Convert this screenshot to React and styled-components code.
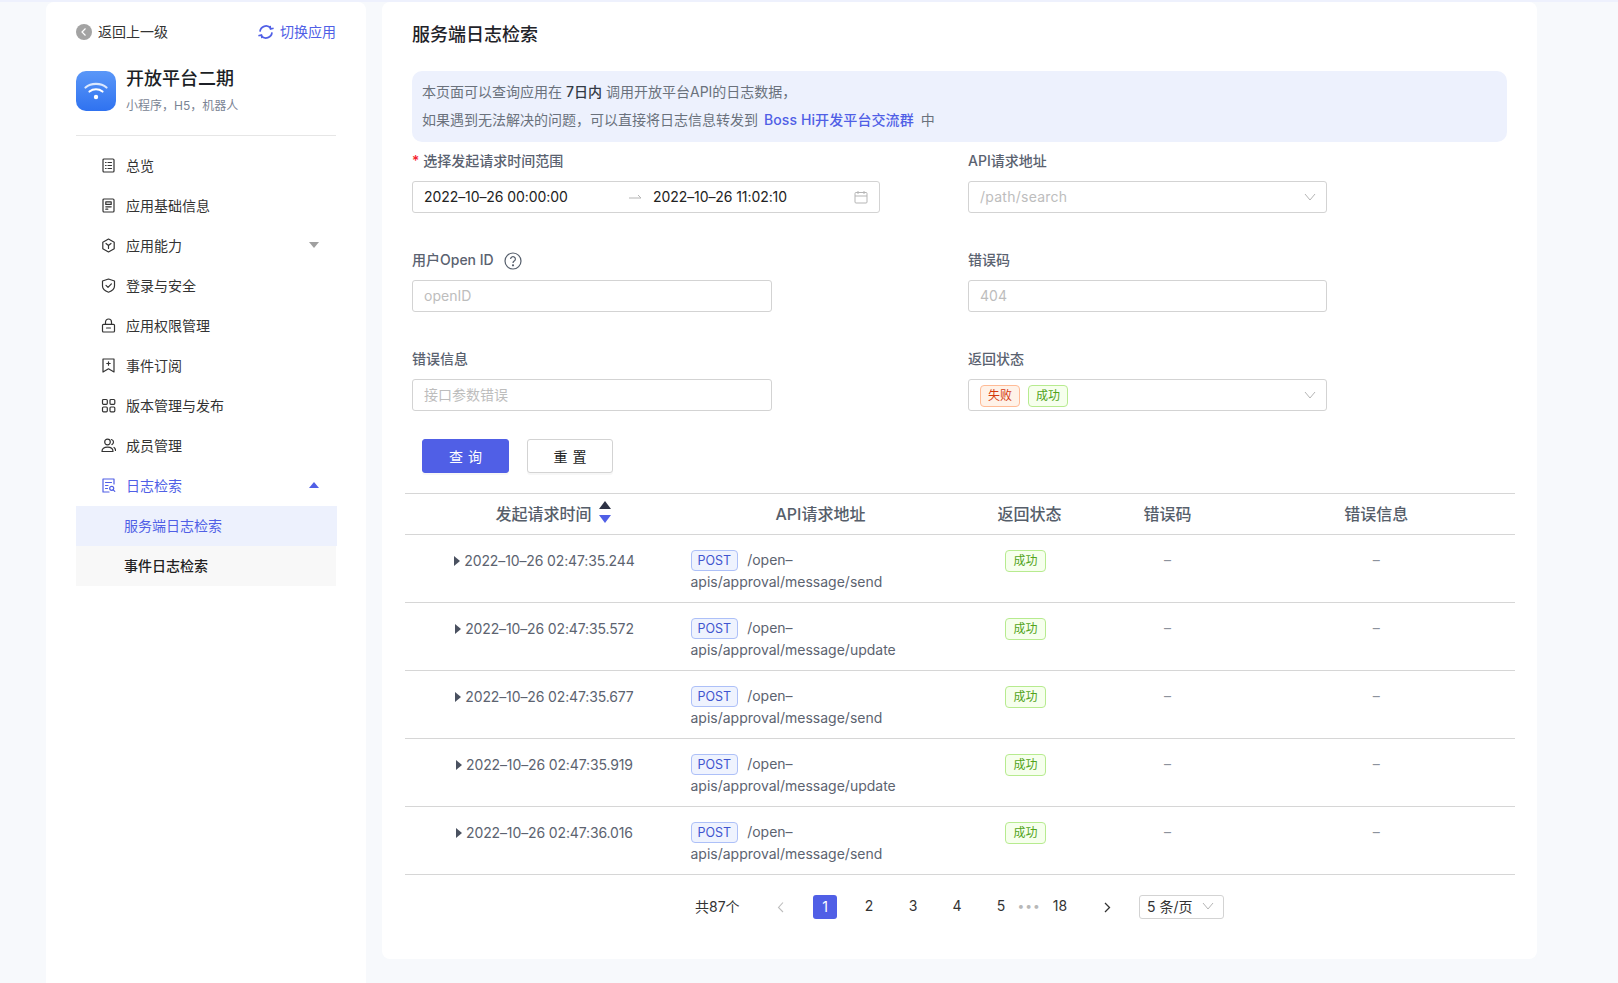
import React from "react";
import styled, { createGlobalStyle } from "styled-components";

const FONT = `Inter, "Noto Sans CJK SC", "Noto Sans", sans-serif`;
const BLUE = "#505fe6";

const Global = createGlobalStyle`
  html, body { margin: 0; padding: 0; height: 100%; background: #f7f9fc; overflow: hidden; }
  body { font-family: ${FONT}; font-size: 14px; color: #222; }
  * { box-sizing: border-box; }
  #root { height: 100%; }
`;

const Page = styled.div`
  height: 983px;
  border-top: 2px solid #eef1fd;
  padding-left: 46px;
  display: flex;
  align-items: flex-start;
  gap: 16px;
`;

/* ---------- sidebar ---------- */
const Sidebar = styled.aside`
  width: 320px;
  height: 981px;
  background: #fff;
  border-radius: 8px 8px 0 0;
  padding: 18px 29px 0 30px;
`;
const TopBar = styled.div`
  display: flex;
  align-items: center;
  justify-content: space-between;
  height: 24px;
`;
const BackLink = styled.div`
  display: flex;
  align-items: center;
  gap: 6px;
  color: #333;
  line-height: 24px;
`;
const SwitchLink = styled.div`
  display: flex;
  align-items: center;
  gap: 6px;
  color: ${BLUE};
  line-height: 24px;
  margin-right: 1px;
`;
const AppHead = styled.div`
  display: flex;
  gap: 10px;
  margin: 27px 1px 10px 0;
  height: 65px;
  border-bottom: 1px solid #e6e6e6;
`;
const AppLogo = styled.div`
  width: 40px;
  height: 40px;
  border-radius: 10px;
  background: linear-gradient(180deg, #5a97f8 0%, #2f72f0 100%);
  display: flex;
  align-items: center;
  justify-content: center;
`;
const AppTitle = styled.div`
  font-size: 18px;
  font-weight: 500;
  color: #1c1f26;
  line-height: 20px;
  margin-top: -2px;
`;
const AppSub = styled.div`
  font-size: 12px;
  color: #7b8494;
  line-height: 18px;
  margin-top: 8px;
`;
const MenuRow = styled.div`
  display: flex;
  align-items: center;
  height: 40px;
  padding: 0 0 2px 25px;
  color: ${(p) => (p.$active ? BLUE : "#333")};
  gap: 10px;
`;
const MenuIconBox = styled.span`
  width: 15px;
  height: 15px;
  display: flex;
`;
const Caret = styled.span`
  margin-left: auto;
  margin-right: 18px;
  width: 0;
  height: 0;
  border-left: 5px solid transparent;
  border-right: 5px solid transparent;
  ${(p) =>
    p.$up
      ? `border-bottom: 6px solid ${BLUE};`
      : `border-top: 6px solid #a0a0a0;`}
`;
const SubRow = styled.div`
  height: 40px;
  display: flex;
  align-items: center;
  padding: 0 0 2px 48px;
  width: ${(p) => (p.$active ? "261px" : "260px")};
  background: ${(p) => (p.$active ? "#edf1fd" : "#f8f8f8")};
  color: ${(p) => (p.$active ? BLUE : "#222")};
  font-weight: ${(p) => (p.$active ? 400 : 500)};
`;

/* ---------- main ---------- */
const Main = styled.main`
  width: 1155px;
  height: 957px;
  background: #fff;
  border-radius: 8px;
  padding: 20px 30px 0;
`;
const Title = styled.h1`
  margin: 0;
  font-size: 18px;
  font-weight: 500;
  line-height: 26px;
  color: #1f2329;
`;
const Notice = styled.div`
  margin-top: 23px;
  height: 71px;
  background: #edf1fd;
  border-radius: 10px;
  padding: 7px 10px;
  color: #6a717c;
  font-size: 14px;
  line-height: 28px;
`;
const Strong = styled.span`
  color: #333a45;
  font-weight: 500;
  margin: 0 4px;
`;
const NoticeLink = styled.span`
  color: ${BLUE};
  font-weight: 500;
  letter-spacing: 0.1px;
  margin: 0 7px 0 6px;
`;
const FormGrid = styled.div`
  margin-top: 7px;
  display: grid;
  grid-template-columns: 556px 1fr;
  row-gap: 35px;
`;
const Field = styled.div``;
const Label = styled.div`
  display: flex;
  align-items: center;
  height: 22px;
  margin-bottom: 10px;
  color: #5a6270;
  font-weight: 500;
  font-size: 14px;
`;
const Required = styled.span`
  color: #f5222d;
  margin-right: 4px;
`;
const HelpIcon = styled.span`
  display: flex;
  margin-left: 10px;
  margin-top: 3px;
`;
const Box = styled.div`
  width: ${(p) => p.$w}px;
  height: 32px;
  border: 1px solid #d3d3d3;
  border-radius: 3px;
  background: #fff;
  display: flex;
  align-items: center;
  padding: 0 11px 1px;
  color: #222;
`;
const TextInput = styled.input`
  width: ${(p) => p.$w}px;
  height: 32px;
  border: 1px solid #d3d3d3;
  border-radius: 3px;
  background: #fff;
  padding: 0 11px 1px;
  font: 14px ${FONT};
  color: #222;
  outline: none;
  display: block;
  &::placeholder { color: #bdbdbd; }
`;
const DateValue = styled.span`
  width: ${(p) => p.$w}px;
  color: #222;
  letter-spacing: -0.08px;
`;
const Arrow = styled.span`
  display: flex;
  width: 25px;
`;
const Placeholder = styled.span`
  color: #bdbdbd;
  flex: 1;
  letter-spacing: 0.25px;
`;
const SelectTag = styled.span`
  height: 22px;
  padding: 0 7px;
  margin: 2px 8px 0 0;
  font-size: 12px;
  line-height: 20px;
  border-radius: 4px;
  border: 1px solid ${(p) => (p.$ok ? "#b7eb8f" : "#ffbb96")};
  background: ${(p) => (p.$ok ? "#f6ffed" : "#fff2e8")};
  color: ${(p) => (p.$ok ? "#52a41a" : "#d4380d")};
`;
const Chevron = styled.span`
  display: flex;
  margin-left: auto;
  margin-right: -2px;
`;
const CalendarSlot = styled.span`
  display: flex;
  margin-left: auto;
`;
const Actions = styled.div`
  margin-top: 28px;
  padding-left: 10px;
  display: flex;
  gap: 18px;
`;
const Button = styled.button`
  width: ${(p) => p.$w}px;
  height: 34px;
  border-radius: 3px;
  font: 14px ${FONT};
  letter-spacing: 5px;
  padding: 0 0 0 5px;
  cursor: pointer;
  border: 1px solid ${(p) => (p.$primary ? BLUE : "#d3d3d3")};
  background: ${(p) => (p.$primary ? BLUE : "#fff")};
  color: ${(p) => (p.$primary ? "#fff" : "#222")};
  box-shadow: 0 2px 0 rgba(0, 0, 0, 0.03);
`;

/* ---------- table ---------- */
const Table = styled.div`
  margin: 20px -8px 0 -7.5px;
  border-top: 1px solid #d6d6d6;
`;
const Row = styled.div`
  display: grid;
  grid-template-columns: 270px 292px 126px 150px 1fr;
  border-bottom: 1px solid #d6d6d6;
  height: ${(p) => (p.$head ? 41 : 68)}px;
`;
const HeadCell = styled.div`
  display: flex;
  align-items: center;
  justify-content: center;
  font-size: 16px;
  font-weight: 500;
  color: #565e6a;
  padding: 0 ${(p) => (p.$last ? 5 : 0)}px 2px ${(p) => (p.$first ? 8 : 0)}px;
  position: relative;
`;
const SortMark = styled.span`
  position: absolute;
  left: 194px;
  top: 7px;
  display: flex;
  flex-direction: column;
  gap: 6px;
`;
const SortTri = styled.span`
  width: 0;
  height: 0;
  border-left: 6.5px solid transparent;
  border-right: 6.5px solid transparent;
  ${(p) =>
    p.$up
      ? `border-bottom: 8px solid #2d3245;`
      : `border-top: 8px solid ${BLUE};`}
`;
const TimeCell = styled.div`
  padding: 15px 0 0 10px;
  display: flex;
  justify-content: center;
  align-items: flex-start;
  color: #5c6370;
  line-height: 22px;
  font-size: 14px;
  letter-spacing: -0.13px;
`;
const RowCaret = styled.span`
  width: 0;
  height: 0;
  margin: 6px 4px 0 0;
  border-top: 5px solid transparent;
  border-bottom: 5px solid transparent;
  border-left: 6px solid #4a5160;
`;
const ApiCell = styled.div`
  padding: 14px 16px 0;
  color: #5c6370;
  line-height: 21.5px;
`;
const MethodTag = styled.span`
  display: inline-block;
  height: 21px;
  line-height: 19px;
  padding: 0 6px;
  font-size: 12.5px;
  border: 1px solid #adc0f8;
  background: #eff3fe;
  color: #3f55cf;
  border-radius: 4px;
  margin-right: 9px;
`;
const StatusCell = styled.div`
  padding: 15px 8px 0 0;
  display: flex;
  justify-content: center;
  align-items: flex-start;
`;
const StatusTag = styled.span`
  height: 22px;
  line-height: 20px;
  padding: 0 7px;
  font-size: 12px;
  border-radius: 4px;
  border: 1px solid #b7eb8f;
  background: #f6ffed;
  color: #52a41a;
`;
const DashCell = styled.div`
  padding: 14px ${(p) => (p.$last ? 5 : 0)}px 0 0;
  text-align: center;
  color: #8c929c;
  line-height: 22px;
`;

/* ---------- pagination ---------- */
const Pager = styled.div`
  margin: 20px 0 0 283px;
  display: flex;
  align-items: center;
  height: 24px;
  color: #333;
`;
const Total = styled.span`
  width: 74px;
  padding-bottom: 2px;
`;
const NavBtn = styled.span`
  display: flex;
  justify-content: center;
  width: 24px;
  margin-right: ${(p) => p.$mr}px;
`;
const PageNum = styled.span`
  width: 24px;
  height: 24px;
  border-radius: 3px;
  display: flex;
  align-items: center;
  justify-content: center;
  padding-bottom: ${(p) => (p.$active ? 1 : 3)}px;
  margin-right: ${(p) => p.$mr ?? 20}px;
  background: ${(p) => (p.$active ? BLUE : "transparent")};
  color: ${(p) => (p.$active ? "#fff" : "#333")};
`;
const Dots = styled.span`
  width: 24px;
  color: #b8b8b8;
  font-size: 12px;
  letter-spacing: 1px;
  text-align: center;
  margin: 0 7px 4px -16px;
`;
const SizeSelect = styled.div`
  width: 85px;
  height: 24px;
  border: 1px solid #d3d3d3;
  border-radius: 3px;
  padding: 0 10px 2px 7px;
  display: flex;
  align-items: center;
  color: #333;
`;

/* ---------- icons ---------- */
const S = ({ children, size = 15, color = "#333", w = 1.2 }) => (
  <svg width={size} height={size} viewBox="0 0 15 15" fill="none" stroke={color} strokeWidth={w} strokeLinecap="round" strokeLinejoin="round">
    {children}
  </svg>
);
const icons = {
  overview: (c) => (
    <S color={c}>
      <rect x="2" y="1" width="11" height="13" rx="1" />
      <path d="M4.5 4.5h.6M4.5 7.5h.6M4.5 10.5h.6M7 4.5h3.5M7 7.5h3.5M7 10.5h3.5" />
    </S>
  ),
  info: (c) => (
    <S color={c}>
      <rect x="2" y="1" width="11" height="13" rx="1" />
      <rect x="4.8" y="3.8" width="5.4" height="2.6" />
      <path d="M4.8 8.8h5.4M4.8 11.2h2" />
    </S>
  ),
  ability: (c) => (
    <S color={c}>
      <path d="M7.5 1 13.2 4.2v6.6L7.5 14 1.8 10.8V4.2z" />
      <path d="M5 5.5l2.5 2 2.5-2M7.5 7.5v3" />
    </S>
  ),
  shield: (c) => (
    <S color={c}>
      <path d="M7.5 1 13.5 3v5c0 3-2.8 5.2-6 6.2C4.3 13.2 1.5 11 1.5 8V3z" />
      <path d="M5 7.3l2 2 3.4-3.4" />
    </S>
  ),
  lock: (c) => (
    <S color={c}>
      <rect x="1.5" y="6.3" width="12" height="7.7" rx="1" />
      <path d="M4.5 6.3V4a3 3 0 0 1 6 0v2.3M5.5 10h4" />
    </S>
  ),
  bookmark: (c) => (
    <S color={c}>
      <path d="M2 1h11v13l-5.5-3.2L2 14z" />
      <path d="M7.5 3.8v3.4M5.8 5.5h3.4" />
    </S>
  ),
  apps: (c) => (
    <S color={c}>
      <rect x="1.5" y="1.5" width="4.8" height="4.8" rx="1" />
      <rect x="9" y="1.5" width="4.8" height="4.8" rx="1" />
      <rect x="1.5" y="9" width="4.8" height="4.8" rx="1" />
      <rect x="9" y="9" width="4.8" height="4.8" rx="1" />
    </S>
  ),
  users: (c) => (
    <S color={c}>
      <circle cx="6.5" cy="4" r="2.8" />
      <path d="M1 13.5c0-3 2-4.3 5.5-4.3s5.5 1.3 5.5 4.3zM10.5 1.5c1.4.5 2 1.5 2 2.6s-.6 2-1.6 2.5M13 9.5c1 .5 1.5 1.5 1.5 3" />
    </S>
  ),
  logs: (c) => (
    <S color={c}>
      <path d="M13 6V1H2v13h6" />
      <path d="M4.5 4.5h6M4.5 7.5h2.5M4.5 10.5h2" />
      <circle cx="10.7" cy="10.3" r="2" />
      <path d="M12.2 11.8l1.6 1.6" />
    </S>
  ),
};
const ChevronDown = () => (
  <svg width="14" height="14" viewBox="0 0 14 14" fill="none" stroke="#b5b5b5" strokeWidth="1">
    <path d="M2 4 7 10l5-6" />
  </svg>
);

const menu = [
  ["overview", "总览"],
  ["info", "应用基础信息"],
  ["ability", "应用能力", "down"],
  ["shield", "登录与安全"],
  ["lock", "应用权限管理"],
  ["bookmark", "事件订阅"],
  ["apps", "版本管理与发布"],
  ["users", "成员管理"],
];
const rows = [
  ["2022–10–26 02:47:35.244", "send"],
  ["2022–10–26 02:47:35.572", "update"],
  ["2022–10–26 02:47:35.677", "send"],
  ["2022–10–26 02:47:35.919", "update"],
  ["2022–10–26 02:47:36.016", "send"],
];

export default function App() {
  return (
    <>
      <Global />
      <Page>
        <Sidebar>
          <TopBar>
            <BackLink>
              <svg width="16" height="16" viewBox="0 0 16 16">
                <circle cx="8" cy="8" r="8" fill="#a3a3a3" />
                <path d="M9.5 4.5 6 8l3.5 3.5" fill="none" stroke="#fff" strokeWidth="1.2" />
              </svg>
              返回上一级
            </BackLink>
            <SwitchLink>
              <svg width="16" height="16" viewBox="0 0 16 16" fill="none" stroke={BLUE} strokeWidth="1.7">
                <path d="M2 7.6A6 6 0 0 1 12.6 4.2" />
                <path d="M14 8.4A6 6 0 0 1 3.4 11.8" />
                <path d="M15.6 4.2 12.6 5 12 1.8" />
                <path d="M.4 11.8l3-.8.6 3.2" />
              </svg>
              切换应用
            </SwitchLink>
          </TopBar>
          <AppHead>
            <AppLogo>
              <svg width="24" height="20" viewBox="0 0 24 20" fill="none" stroke="#fff" strokeWidth="2.2" strokeLinecap="round">
                <path d="M1.5 6.5C7 1.7 17 1.7 22.5 6.5" opacity=".8" />
                <path d="M5.5 10.5c3.8-3 9.2-3 13 0" />
                <circle cx="12" cy="16" r="2.2" fill="#fff" stroke="none" />
              </svg>
            </AppLogo>
            <div>
              <AppTitle>开放平台二期</AppTitle>
              <AppSub>小程序，H5，机器人</AppSub>
            </div>
          </AppHead>
          {menu.map(([icon, label, caret]) => (
            <MenuRow key={label}>
              <MenuIconBox>{icons[icon]("#333")}</MenuIconBox>
              {label}
              {caret && <Caret />}
            </MenuRow>
          ))}
          <MenuRow $active>
            <MenuIconBox>{icons.logs(BLUE)}</MenuIconBox>
            日志检索
            <Caret $up />
          </MenuRow>
          <SubRow $active>服务端日志检索</SubRow>
          <SubRow>事件日志检索</SubRow>
        </Sidebar>

        <Main>
          <Title>服务端日志检索</Title>
          <Notice>
            <div>
              本页面可以查询应用在<Strong>7日内</Strong>调用开放平台API的日志数据，
            </div>
            <div>
              如果遇到无法解决的问题，可以直接将日志信息转发到<NoticeLink>Boss Hi开发平台交流群</NoticeLink>中
            </div>
          </Notice>

          <FormGrid>
            <Field>
              <Label>
                <Required>*</Required>选择发起请求时间范围
              </Label>
              <Box $w={468}>
                <DateValue $w={204}>2022–10–26 00:00:00</DateValue>
                <Arrow>
                  <svg width="14" height="14" viewBox="0 0 14 14" fill="none" stroke="#b5b5b5" strokeWidth="1">
                    <path d="M1 8h12l-3-3" />
                  </svg>
                </Arrow>
                <DateValue $w={190}>2022–10–26 11:02:10</DateValue>
                <CalendarSlot>
                  <svg width="14" height="14" viewBox="0 0 14 14" fill="none" stroke="#b5b5b5" strokeWidth="1">
                    <rect x="1" y="2.5" width="12" height="10.5" rx="1" />
                    <path d="M1 6h12M4 1v3M10 1v3" />
                  </svg>
                </CalendarSlot>
              </Box>
            </Field>
            <Field>
              <Label>API请求地址</Label>
              <Box $w={359}>
                <Placeholder>/path/search</Placeholder>
                <Chevron>
                  <ChevronDown />
                </Chevron>
              </Box>
            </Field>
            <Field>
              <Label>
                用户Open ID
                <HelpIcon>
                  <svg width="18" height="18" viewBox="0 0 18 18" fill="none" stroke="#555e6b" strokeWidth="1.2">
                    <circle cx="9" cy="9" r="8" />
                    <path d="M6.6 7a2.4 2.4 0 1 1 3.6 2.1c-.8.5-1.2.9-1.2 1.9" />
                    <circle cx="9" cy="13.3" r=".5" fill="#555e6b" />
                  </svg>
                </HelpIcon>
              </Label>
              <TextInput $w={360} placeholder="openID" readOnly />
            </Field>
            <Field>
              <Label>错误码</Label>
              <TextInput $w={359} placeholder="404" readOnly />
            </Field>
            <Field>
              <Label>错误信息</Label>
              <TextInput $w={360} placeholder="接口参数错误" readOnly />
            </Field>
            <Field>
              <Label>返回状态</Label>
              <Box $w={359}>
                <SelectTag>失败</SelectTag>
                <SelectTag $ok>成功</SelectTag>
                <Chevron>
                  <ChevronDown />
                </Chevron>
              </Box>
            </Field>
          </FormGrid>

          <Actions>
            <Button $primary $w={87}>查询</Button>
            <Button $w={86}>重置</Button>
          </Actions>

          <Table>
            <Row $head>
              <HeadCell $first>
                发起请求时间
                <SortMark>
                  <SortTri $up />
                  <SortTri />
                </SortMark>
              </HeadCell>
              <HeadCell>API请求地址</HeadCell>
              <HeadCell>返回状态</HeadCell>
              <HeadCell>错误码</HeadCell>
              <HeadCell $last>错误信息</HeadCell>
            </Row>
            {rows.map(([time, action]) => (
              <Row key={time}>
                <TimeCell>
                  <RowCaret />
                  {time}
                </TimeCell>
                <ApiCell>
                  <MethodTag>POST</MethodTag>/open–apis/approval/message/{action}
                </ApiCell>
                <StatusCell>
                  <StatusTag>成功</StatusTag>
                </StatusCell>
                <DashCell>–</DashCell>
                <DashCell $last>–</DashCell>
              </Row>
            ))}
          </Table>

          <Pager>
            <Total>共87个</Total>
            <NavBtn $mr={20}>
              <svg width="12" height="12" viewBox="0 0 12 12" fill="none" stroke="#bdbdbd" strokeWidth="1.1">
                <path d="M8 1.5 3.5 6.5 8 11" />
              </svg>
            </NavBtn>
            <PageNum $active>1</PageNum>
            <PageNum>2</PageNum>
            <PageNum>3</PageNum>
            <PageNum>4</PageNum>
            <PageNum>5</PageNum>
            <Dots>•••</Dots>
            <PageNum $mr={23}>18</PageNum>
            <NavBtn $mr={20}>
              <svg width="12" height="12" viewBox="0 0 12 12" fill="none" stroke="#333" strokeWidth="1.3">
                <path d="M4 2 8.5 6.5 4 11" />
              </svg>
            </NavBtn>
            <SizeSelect>
              5 条/页
              <Chevron>
                <ChevronDown />
              </Chevron>
            </SizeSelect>
          </Pager>
        </Main>
      </Page>
    </>
  );
}
